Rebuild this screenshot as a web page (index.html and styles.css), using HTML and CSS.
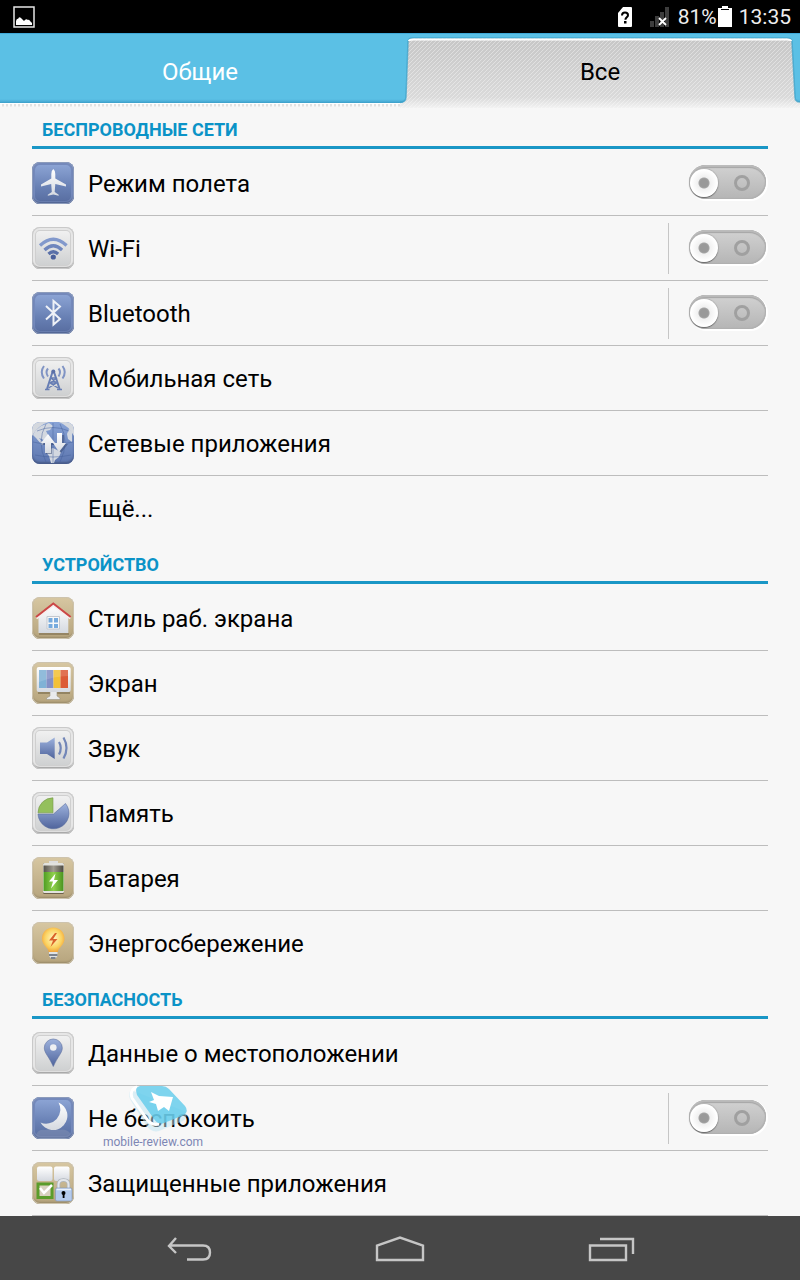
FILE: index.html
```html
<!DOCTYPE html>
<html lang="ru">
<head>
    <meta charset="UTF-8">
    <meta name="viewport" content="width=device-width, initial-scale=1">
    <title>Настройки</title>
    <link rel="stylesheet" href="styles.css">
</head>
<body>
    <!-- shared gradients -->
    <svg class="defs" aria-hidden="true">
        <defs>
            <linearGradient id="gBlue" x1="0" y1="0" x2="0" y2="1"><stop offset="0" stop-color="#9db2dd"/><stop offset="1" stop-color="#4f649c"/></linearGradient>
            <linearGradient id="gWhite" x1="0" y1="0" x2="0" y2="1"><stop offset="0" stop-color="#ffffff"/><stop offset="1" stop-color="#d5d9e0"/></linearGradient>
            <linearGradient id="gGreen" x1="0" y1="0" x2="1" y2="0"><stop offset="0" stop-color="#4f9d22"/><stop offset=".5" stop-color="#8fd04c"/><stop offset="1" stop-color="#4a931f"/></linearGradient>
            <linearGradient id="gMetal" x1="0" y1="0" x2="1" y2="0"><stop offset="0" stop-color="#55524a"/><stop offset=".5" stop-color="#a19c90"/><stop offset="1" stop-color="#4c4941"/></linearGradient>
            <radialGradient id="gBulb" cx=".5" cy=".45" r=".6"><stop offset="0" stop-color="#fff7c4"/><stop offset=".6" stop-color="#fbd464"/><stop offset="1" stop-color="#f09a30"/></radialGradient>
            <linearGradient id="gTab" x1="0" y1="0" x2="0" y2="1"><stop offset="0" stop-color="#c6c6c6"/><stop offset=".85" stop-color="#dadada"/><stop offset="1" stop-color="#f2f2f2"/></linearGradient>
            <pattern id="hatch" width="4" height="4" patternUnits="userSpaceOnUse"><path d="M-1 1L1-1M0 4L4 0M3 5L5 3" stroke="#ffffff" stroke-opacity=".38" stroke-width="1"/></pattern>
        </defs>
    </svg>

    <div class="status-bar">
        <svg class="status-photo" width="22" height="22" viewBox="0 0 22 22" aria-hidden="true">
            <rect x="1" y="1" width="20" height="20" fill="none" stroke="#e6e6e6" stroke-width="1.5"/>
            <path d="M3 19v-4q1-3 2-2 1-3 3-1l3 3q2-3 4-1 1-1 2 1l2 2v2z" fill="#fff"/>
        </svg>
        <div class="status-right">
            <svg class="status-sim" width="14" height="20" viewBox="0 0 14 20" aria-hidden="true">
                <path d="M5 0h8q1 0 1 1v18q0 1-1 1H1q-1 0-1-1V6z" fill="#fff"/>
                <path d="M4 8.500q0-3 3-3t3 2.700c0 2-2.600 2.300-2.600 4.600" fill="none" stroke="#000" stroke-width="2"/>
                <rect x="6" y="14" width="2.500" height="2.500"/>
            </svg>
            <svg class="status-signal" width="21" height="20" viewBox="0 0 21 20" aria-hidden="true">
                <path d="M1 14h4v6H1zM6 9h4v11H6zM11 5h4v15h-4zM16 0h4v20h-4z" fill="#3d3d3d"/>
                <path d="M10 11l7 7M17 11l-7 7" stroke="#fff" stroke-width="1.800"/>
            </svg>
            <span>81%</span>
            <svg class="status-battery" width="14" height="21" viewBox="0 0 14 21" aria-hidden="true">
                <path d="M4 0h6v2h4v3H0V2h4z" fill="#fff"/>
                <path d="M3 3h8v1H3z"/>
                <path d="M0 5h14v16H0z" fill="#fff"/>
            </svg>
            <span>13:35</span>
        </div>
    </div>

    <div class="tabs" role="tablist">
        <button class="tab" role="tab" aria-selected="false">Общие</button>
        <button class="tab tab-active" role="tab" aria-selected="true">
            <svg class="tab-shape" viewBox="0 0 400 75" preserveAspectRatio="none" aria-hidden="true">
                <path d="M0 70Q6 70 6 64L8 9Q8 5 13 5H387Q392 5 392 9L395 64Q395 69 400 69V75H0z" fill="url(#gTab)"/>
                <path d="M0 70Q6 70 6 64L8 9Q8 5 13 5H387Q392 5 392 9L395 64Q395 69 400 69V75H0z" fill="url(#hatch)"/>
                <path d="M0 69Q6 69 6 64L8 9Q8 5 13 5H387Q392 5 392 9L395 64Q395 69 400 69" fill="none" stroke="#3b9fc8" stroke-opacity=".7" stroke-width="1.500"/>
                <path d="M9 8Q9 6.500 13 6.500H387Q391 6.500 391 8" fill="none" stroke="#fff" stroke-width="2"/>
            </svg>
            <span>Все</span>
        </button>
    </div>

    <main class="settings">
        <section>
            <h2>БЕСПРОВОДНЫЕ СЕТИ</h2>
            <ul>
                <li>
                    <label class="row" for="airplane">
                        <svg class="icon blue" viewBox="0 0 42 42" aria-hidden="true">
                            <path d="M21.300 7q2 1.500 2 5v4.500L34 22.500v2L23.300 22l-.6 8 4 2.800v1L21.300 32.500 15.800 33.800v-1l4-2.800-.6-8L9 24.500v-2l10.300-6V12q0-3.500 2-5z" fill="url(#gWhite)"/>
                        </svg>
                        <span>Режим полета</span>
                    </label>
                    <div class="switch-cell plain"><input class="switch" type="checkbox" id="airplane"></div>
                </li>
                <li>
                    <a class="row" href="#wifi" id="wifi-label">
                        <svg class="icon gray" viewBox="0 0 42 42" aria-hidden="true">
                            <g fill="none" stroke="#6c84bb" stroke-width="3.200">
                                <path d="M8 18.500Q21.300 6 34.600 18.500" stroke="#8299cc"/>
                                <path d="M12.500 23Q21.300 14.500 30.100 23" stroke="#6f86bd"/>
                                <path d="M16.500 27Q21.300 22.500 26.100 27" stroke="#5a70a8"/>
                            </g>
                            <circle cx="21.300" cy="30" r="2.600" fill="#4b609b"/>
                        </svg>
                        <span>Wi-Fi</span>
                    </a>
                    <div class="switch-cell"><input class="switch" type="checkbox" aria-labelledby="wifi-label"></div>
                </li>
                <li>
                    <a class="row" href="#bluetooth" id="bt-label">
                        <svg class="icon blue" viewBox="0 0 42 42" aria-hidden="true">
                            <path d="M14 14L28 27 21.500 32.500V9L28 14.500 14 27.500" fill="none" stroke="#eef1f7" stroke-width="2"/>
                        </svg>
                        <span>Bluetooth</span>
                    </a>
                    <div class="switch-cell"><input class="switch" type="checkbox" aria-labelledby="bt-label"></div>
                </li>
                <li>
                    <a class="row" href="#mobile">
                        <svg class="icon gray" viewBox="0 0 42 42" aria-hidden="true">
                            <g fill="none" stroke="#677eb4">
                                <path d="M20.500 15L15 32M22 15l5.600 17" stroke-width="2"/>
                                <path d="M19 21h5M18 26l7-5M24.500 26L19 21M16.500 31l8-5M26 31l-8-5M18 26h7M13 32.500h4.500M25 32.500h5" stroke-width="1.400"/>
                                <path d="M16 11.500q-3 3.500 0 8M26.500 11.500q3 3.500 0 8M12 9q-4.500 6 0 12.500M30.500 9q4.500 6 0 12.500" stroke="#8094c4" stroke-width="2"/>
                            </g>
                            <circle cx="21.300" cy="14.500" r="2" fill="#5a70a8"/>
                        </svg>
                        <span>Мобильная сеть</span>
                    </a>
                </li>
                <li>
                    <a class="row" href="#netapps">
                        <svg class="icon globe" viewBox="0 0 42 42" aria-hidden="true">
                            <path d="M0 14Q6 3 17 0H8Q0 0 0 8zM42 14Q37 4 27 0h7q8 0 8 8z" fill="#d4d8de"/>
                            <path d="M3 9l6-5 8-3 4 3-3 4-4 1 2 4-4 5-5-2 5 6-2 1-6-7-3-3zM15 28l6-2 8 4-2 5-4 3-1 3h-3l-2-7-3-4zM37 7l3 2v11l-4-3-1-5z" fill="#d3d8e0"/>
                            <g fill="none" stroke="#46619c" stroke-width=".8" opacity=".6">
                                <path d="M5 9q16-7 32 0M1 20q20 5 40 0M3 33q18 4 36 0M21 1v40M28 2q10 18 0 38M14 2q-10 18 0 38"/>
                            </g>
                            <path d="M17 14l7 9h-4v9h-6v-9h-4zM26 13h6v9h4l-7 9-7-9h4z" fill="#33456f" opacity=".5"/>
                            <path d="M16 12l7 9h-4v10h-6V21H9zM25 11h5v10h4l-7 9-6-9h4z" fill="url(#gWhite)"/>
                        </svg>
                        <span>Сетевые приложения</span>
                    </a>
                </li>
                <li><a class="row no-icon" href="#more"><span>Ещё...</span></a></li>
            </ul>
        </section>

        <section>
            <h2>УСТРОЙСТВО</h2>
            <ul>
                <li>
                    <a class="row" href="#home">
                        <svg class="icon tan" viewBox="0 0 42 42" aria-hidden="true">
                            <path d="M7 37h30" stroke="#7d6f50" stroke-width="2" opacity=".6"/>
                            <path d="M6.500 36V19L21.300 8l15 11v17z" fill="url(#gWhite)"/>
                            <path d="M4.500 21.500L21.300 8.500l17 13" fill="none" stroke="#f6eeee" stroke-width="2"/>
                            <path d="M4 20L21.300 6.500 38.700 20" fill="none" stroke="#cc4747" stroke-width="2"/>
                            <path d="M15 19.500h12.500V32H15z" fill="#f8f8f8" stroke="#c4c8cf"/>
                            <path d="M16.500 21h4v4.500h-4zM22 21h4v4.500h-4zM16.500 27h4v4h-4zM22 27h4v4h-4z" fill="#76aadd"/>
                        </svg>
                        <span>Стиль раб. экрана</span>
                    </a>
                </li>
                <li>
                    <a class="row" href="#display">
                        <svg class="icon tan" viewBox="0 0 42 42" aria-hidden="true">
                            <path d="M6 31h32" stroke="#786a4b" stroke-width="2" opacity=".6"/>
                            <path d="M18 29h7v5l3 2v1.500H14.500V36l3.500-2z" fill="#e9ebed" stroke="#9a9382" stroke-width=".6"/>
                            <rect x="4.700" y="5" width="34" height="25" rx="2" fill="url(#gWhite)"/>
                            <path d="M7 8h7.500v18H7z" fill="#7fb2d6"/>
                            <path d="M14.500 8h7v18h-7z" fill="#8390c5"/>
                            <path d="M21.500 8h7v18h-7z" fill="#f2c136"/>
                            <path d="M28.500 8H36v18h-7.500z" fill="#dc5b37"/>
                            <path d="M7 8h29v6q-14 0-29 6z" fill="#fff" opacity=".14"/>
                        </svg>
                        <span>Экран</span>
                    </a>
                </li>
                <li>
                    <a class="row" href="#sound">
                        <svg class="icon gray" viewBox="0 0 42 42" aria-hidden="true">
                            <path d="M8 15.500h7l7.700-5V32L15 27H8z" fill="url(#gBlue)"/>
                            <path d="M27 15q3.500 6 0 12.500M31.500 10.500q6 10.500 0 21" fill="none" stroke="#7387b8" stroke-width="2.200"/>
                        </svg>
                        <span>Звук</span>
                    </a>
                </li>
                <li>
                    <a class="row" href="#storage">
                        <svg class="icon gray" viewBox="0 0 42 42" aria-hidden="true">
                            <path d="M6 22h15.500L33.500 11.500A15.500 15.500 0 1 1 6 22z" fill="url(#gBlue)" stroke="#5d719f" stroke-width=".6"/>
                            <path d="M21 20.800H6A15 15 0 0 1 21 5.800z" fill="#94c05c" stroke="#75994c" stroke-width=".6"/>
                        </svg>
                        <span>Память</span>
                    </a>
                </li>
                <li>
                    <a class="row" href="#battery">
                        <svg class="icon tan" viewBox="0 0 42 42" aria-hidden="true">
                            <path d="M17 4h9v3h-9z" fill="#dedede"/>
                            <rect x="11" y="6" width="21" height="31" rx="1.500" fill="#6e6249"/>
                            <rect x="11" y="6" width="21" height="30" rx="1.500" fill="#e2e2de"/>
                            <path d="M11.500 8.500h20V15h-20z" fill="url(#gMetal)"/>
                            <path d="M11.500 15h20v19h-20z" fill="url(#gGreen)"/>
                            <path d="M23.500 16.500l-6.500 8h4l-2 7 7-8.500h-4z" fill="#fff"/>
                        </svg>
                        <span>Батарея</span>
                    </a>
                </li>
                <li>
                    <a class="row" href="#power">
                        <svg class="icon tan" viewBox="0 0 42 42" aria-hidden="true">
                            <path d="M21.300 5.500c7 0 11.200 5 11.200 11 0 7-6 8.500-6.700 13.500h-9C16 25 10 23.500 10 16.500c0-6 4.300-11 11.300-11z" fill="url(#gBulb)"/>
                            <path d="M17 30h8.500v4l-2.500 3h-3.500L17 34z" fill="#dfe3e7"/>
                            <path d="M17 33h8.500M19 36h4.500" stroke="#5c6470" stroke-width="1.500"/>
                            <path d="M23 11l-6 7.500h4L18.500 25l7-8h-4.300L25 11z" fill="#d9622b"/>
                        </svg>
                        <span>Энергосбережение</span>
                    </a>
                </li>
            </ul>
        </section>

        <section>
            <h2>БЕЗОПАСНОСТЬ</h2>
            <ul>
                <li>
                    <a class="row" href="#location">
                        <svg class="icon gray" viewBox="0 0 42 42" aria-hidden="true">
                            <path d="M21.300 7a9 9 0 0 1 9 9c0 5-5 9-9 18.500C17.300 25 12.300 21 12.300 16a9 9 0 0 1 9-9z" fill="url(#gBlue)" stroke="#5e71a0" stroke-width=".6"/>
                            <circle cx="21.300" cy="15.500" r="3.300" fill="#eef0f2"/>
                        </svg>
                        <span>Данные о местоположении</span>
                    </a>
                </li>
                <li class="has-watermark">
                    <a class="row" href="#dnd" id="dnd-label">
                        <svg class="icon blue" viewBox="0 0 42 42" aria-hidden="true">
                            <path d="M4 38q2-6 9-5 8-3 13 0 8-2 12 3v2q-2 3-6 3H9q-4 0-5-3z" fill="#8391b4" opacity=".5"/>
                            <path d="M26.500 5.500A14.300 14.300 0 1 1 8.500 25.500 14.200 14.200 0 0 0 26.500 5.500z" fill="url(#gWhite)"/>
                        </svg>
                        <span>Не беспокоить</span>
                    </a>
                    <div class="switch-cell"><input class="switch" type="checkbox" aria-labelledby="dnd-label"></div>
                    <div class="watermark">
                        <svg width="64" height="50" viewBox="0 0 64 50" aria-hidden="true">
                            <path d="M3 6Q0 9 2 15L18 41q5 8 13 6l24-10q5-3 3-9z" fill="#bfe6f3" opacity=".5"/>
                            <path d="M9 3Q1 6 4 14l14 20q5 8 13 6" fill="none" stroke="#fff" stroke-width="3"/>
                            <path d="M12 2h22q4 0 7 3l16 17q4 5-1 9l-20 8q-6 2-10-4L9 11Q6 3 12 2z" fill="#5fcaeb" opacity=".8"/>
                            <path d="M23 8l8 4 14 1-4 14-5-4-6 4-2-7-7-2 5-2z" fill="#fff"/>
                        </svg>
                        <span>mobile-review.com</span>
                    </div>
                </li>
                <li>
                    <a class="row" href="#protected">
                        <svg class="icon tan" viewBox="0 0 42 42" aria-hidden="true">
                            <rect x="5" y="4.500" width="15.500" height="14.500" rx="2" fill="url(#gWhite)"/>
                            <rect x="22" y="4.500" width="15.500" height="14.500" rx="2" fill="url(#gWhite)"/>
                            <rect x="6" y="22" width="14" height="13.500" fill="#d8d1bf" stroke="#5a9c2b" stroke-width="3"/>
                            <path d="M8 26l4 5 8-8" fill="none" stroke="#fff" stroke-width="2.500"/>
                            <path d="M26.500 27v-4.500q0-4.500 5-4.500t5 4.500V27" fill="none" stroke="#aeb4bb" stroke-width="3.400"/>
                            <path d="M26.500 27v-4.500q0-4.500 5-4.500t5 4.500V27" fill="none" stroke="#e3e6ea" stroke-width="2"/>
                            <rect x="23.500" y="26" width="16.500" height="13" rx="1.500" fill="#b5cbed" stroke="#7d93b8" stroke-width=".6"/>
                            <path d="M24.500 27.500h14.500" stroke="#e8f0fb" stroke-width="1.500"/>
                            <circle cx="31.500" cy="31" r="2"/>
                            <path d="M30.700 31h1.800v5h-1.800z"/>
                        </svg>
                        <span>Защищенные приложения</span>
                    </a>
                </li>
            </ul>
        </section>
    </main>

    <nav class="nav-bar">
        <button aria-label="Назад">
            <svg width="46" height="26" viewBox="0 0 46 26"><path d="M10 2L3 10l7 7M3 9.500h34q7 0 7 7t-7 7H21" fill="none" stroke="#c6c6c6" stroke-width="2.400"/></svg>
        </button>
        <button aria-label="Домой">
            <svg width="50" height="26" viewBox="0 0 50 26"><path d="M2 24V9.500L25 1.500l23 8V24z" fill="none" stroke="#c6c6c6" stroke-width="2.400"/></svg>
        </button>
        <button aria-label="Недавние">
            <svg width="48" height="26" viewBox="0 0 48 26"><path d="M3 9.500h36V24H3zM13 3h33v15" fill="none" stroke="#c6c6c6" stroke-width="2.400"/></svg>
        </button>
    </nav>
</body>
</html>
```
FILE: styles.css
```css
* {
    box-sizing: border-box;
}
body {
    margin: 0;
    height: 100vh;
    display: flex;
    flex-direction: column;
    background: #f7f7f7;
    color: #000;
    font-family: Roboto, "Noto Sans", sans-serif;
    font-size: 24px;
}
.defs {
    position: absolute;
    width: 0;
    height: 0;
}
button {
    border: 0;
    padding: 0;
    background: none;
    font: inherit;
}

/* status bar */
.status-bar {
    flex: none;
    height: 33px;
    padding: 0 9px 0 13px;
    display: flex;
    align-items: center;
    justify-content: space-between;
    background: #000;
    color: #eee;
    font-size: 21px;
}
.status-right {
    display: flex;
    align-items: center;
}
.status-sim {
    margin-right: 17px;
}
.status-signal {
    margin-right: 8px;
}
.status-battery {
    margin: 0 7px 0 1px;
}

/* tabs */
.tabs {
    flex: none;
    height: 75px;
    display: grid;
    grid-template-columns: 1fr 1fr;
    background:
        linear-gradient(#3fa9d8, #3fa9d8) 0 0 / 100% 1px no-repeat,
        linear-gradient(#5bc0e5 66px, #4fb2db 68px, #3a9dc8 70px, #fff 70px, #fff 71px, transparent 71px, transparent 73px, #f7f7f7 74px),
        repeating-linear-gradient(90deg, #fafafa 0 2px, #e2e2e2 2px 4px);
}
.tab {
    position: relative;
    padding-top: 3px;
    color: #fff;
}
.tab-active {
    color: #000;
}
.tab-active span {
    position: relative;
}
.tab-shape {
    position: absolute;
    left: 0;
    top: 0;
    width: 100%;
    height: 100%;
}

/* settings list */
.settings {
    flex: 1;
    min-height: 0;
    margin-top: -2px;
    overflow: hidden;
    padding: 0 32px;
}
h2 {
    height: 43px;
    margin: 0;
    padding: 11px 10px 0;
    border-bottom: 3px solid #1a97c6;
    color: #0b93c7;
    font-size: 18px;
    line-height: 26px;
    font-weight: 700;
}
ul {
    margin: 0;
    padding: 2px 0 0;
    list-style: none;
}
li {
    display: flex;
    align-items: center;
    height: 65px;
    border-bottom: 1px solid #bdbdbd;
}
section:not(:last-child) li:last-child {
    border-bottom-color: transparent;
}
.row {
    flex: 1;
    display: flex;
    align-items: center;
    gap: 14px;
    color: #000;
    text-decoration: none;
}
.row span {
    padding-top: 2px;
}
.no-icon {
    padding-left: 56px;
}
.icon {
    flex: none;
    width: 42px;
    height: 42px;
    border-radius: 8px;
}
.blue {
    background: linear-gradient(#90a8d8, #6880b4 60%, #566b9e);
    box-shadow: inset 0 0 0 1px #8c9bbb, inset 0 -2px 2px #485b89, inset 0 0 0 3px #7489bb;
}
.gray {
    background: linear-gradient(#f4f4f4, #cbcdce);
    box-shadow: inset 0 0 0 1px #c9c9c9, inset 0 -2px 1px #a2a2a2, inset 0 0 0 3px #e6e6e6, inset 0 0 0 4px #cfcfcf;
}
.tan {
    background: linear-gradient(#d7c7a2, #b6a47d);
    box-shadow: inset 0 0 0 1px #cdc3ad, inset 0 -2px 2px #988967;
}
.globe {
    background: linear-gradient(#88a3d6, #5c75ae);
    box-shadow: inset 0 -2px 2px #485b89;
}

/* switches */
.switch-cell {
    width: 100px;
    height: 51px;
    padding: 0 0 2px 20px;
    display: flex;
    align-items: center;
    border-left: 1px solid #c6c6c6;
}
.switch-cell.plain {
    border-left-color: transparent;
}
.switch {
    appearance: none;
    display: flex;
    align-items: center;
    justify-content: space-between;
    width: 77px;
    height: 34px;
    margin: 0;
    padding: 2px 16px 1px 1px;
    border-radius: 17px;
    background: linear-gradient(#d2d2d2, #b5b5b5);
    box-shadow: inset 0 2px 1px #bcbcbc, inset 0 3px 1px #a2a2a2, inset -1px -1px 1px #b0b0b0, 1px 1px 0 1px #fff;
}
.switch::before {
    content: "";
    width: 28px;
    height: 28px;
    border-radius: 50%;
    background: radial-gradient(circle, #999 4px, #a4a4a4 5px, #f0f0f0 6px, #fff 13px);
    box-shadow: 0 1px 1px #666, 0 0 1px 1px #b4b4b4;
}
.switch::after {
    content: "";
    width: 16px;
    height: 16px;
    border: 3px solid #a0a0a0;
    border-radius: 50%;
    box-sizing: border-box;
}
.switch:checked {
    flex-direction: row-reverse;
    padding: 2px 1px 1px 16px;
    background: #5bc0e5;
}

/* watermark lies over the row */
.has-watermark {
    position: relative;
}
.watermark {
    position: absolute;
    left: 71px;
    top: -2px;
    display: flex;
    flex-direction: column;
    pointer-events: none;
    color: #7d86b4;
    font-size: 12px;
    line-height: 16px;
}
.watermark svg {
    margin-left: 25px;
}

/* navigation bar */
.nav-bar {
    flex: none;
    height: 64px;
    padding: 2px 84px 0;
    display: grid;
    grid-template-columns: repeat(3, 1fr);
    background: #474747;
}
.nav-bar button {
    display: flex;
    align-items: center;
    justify-content: center;
}
```
